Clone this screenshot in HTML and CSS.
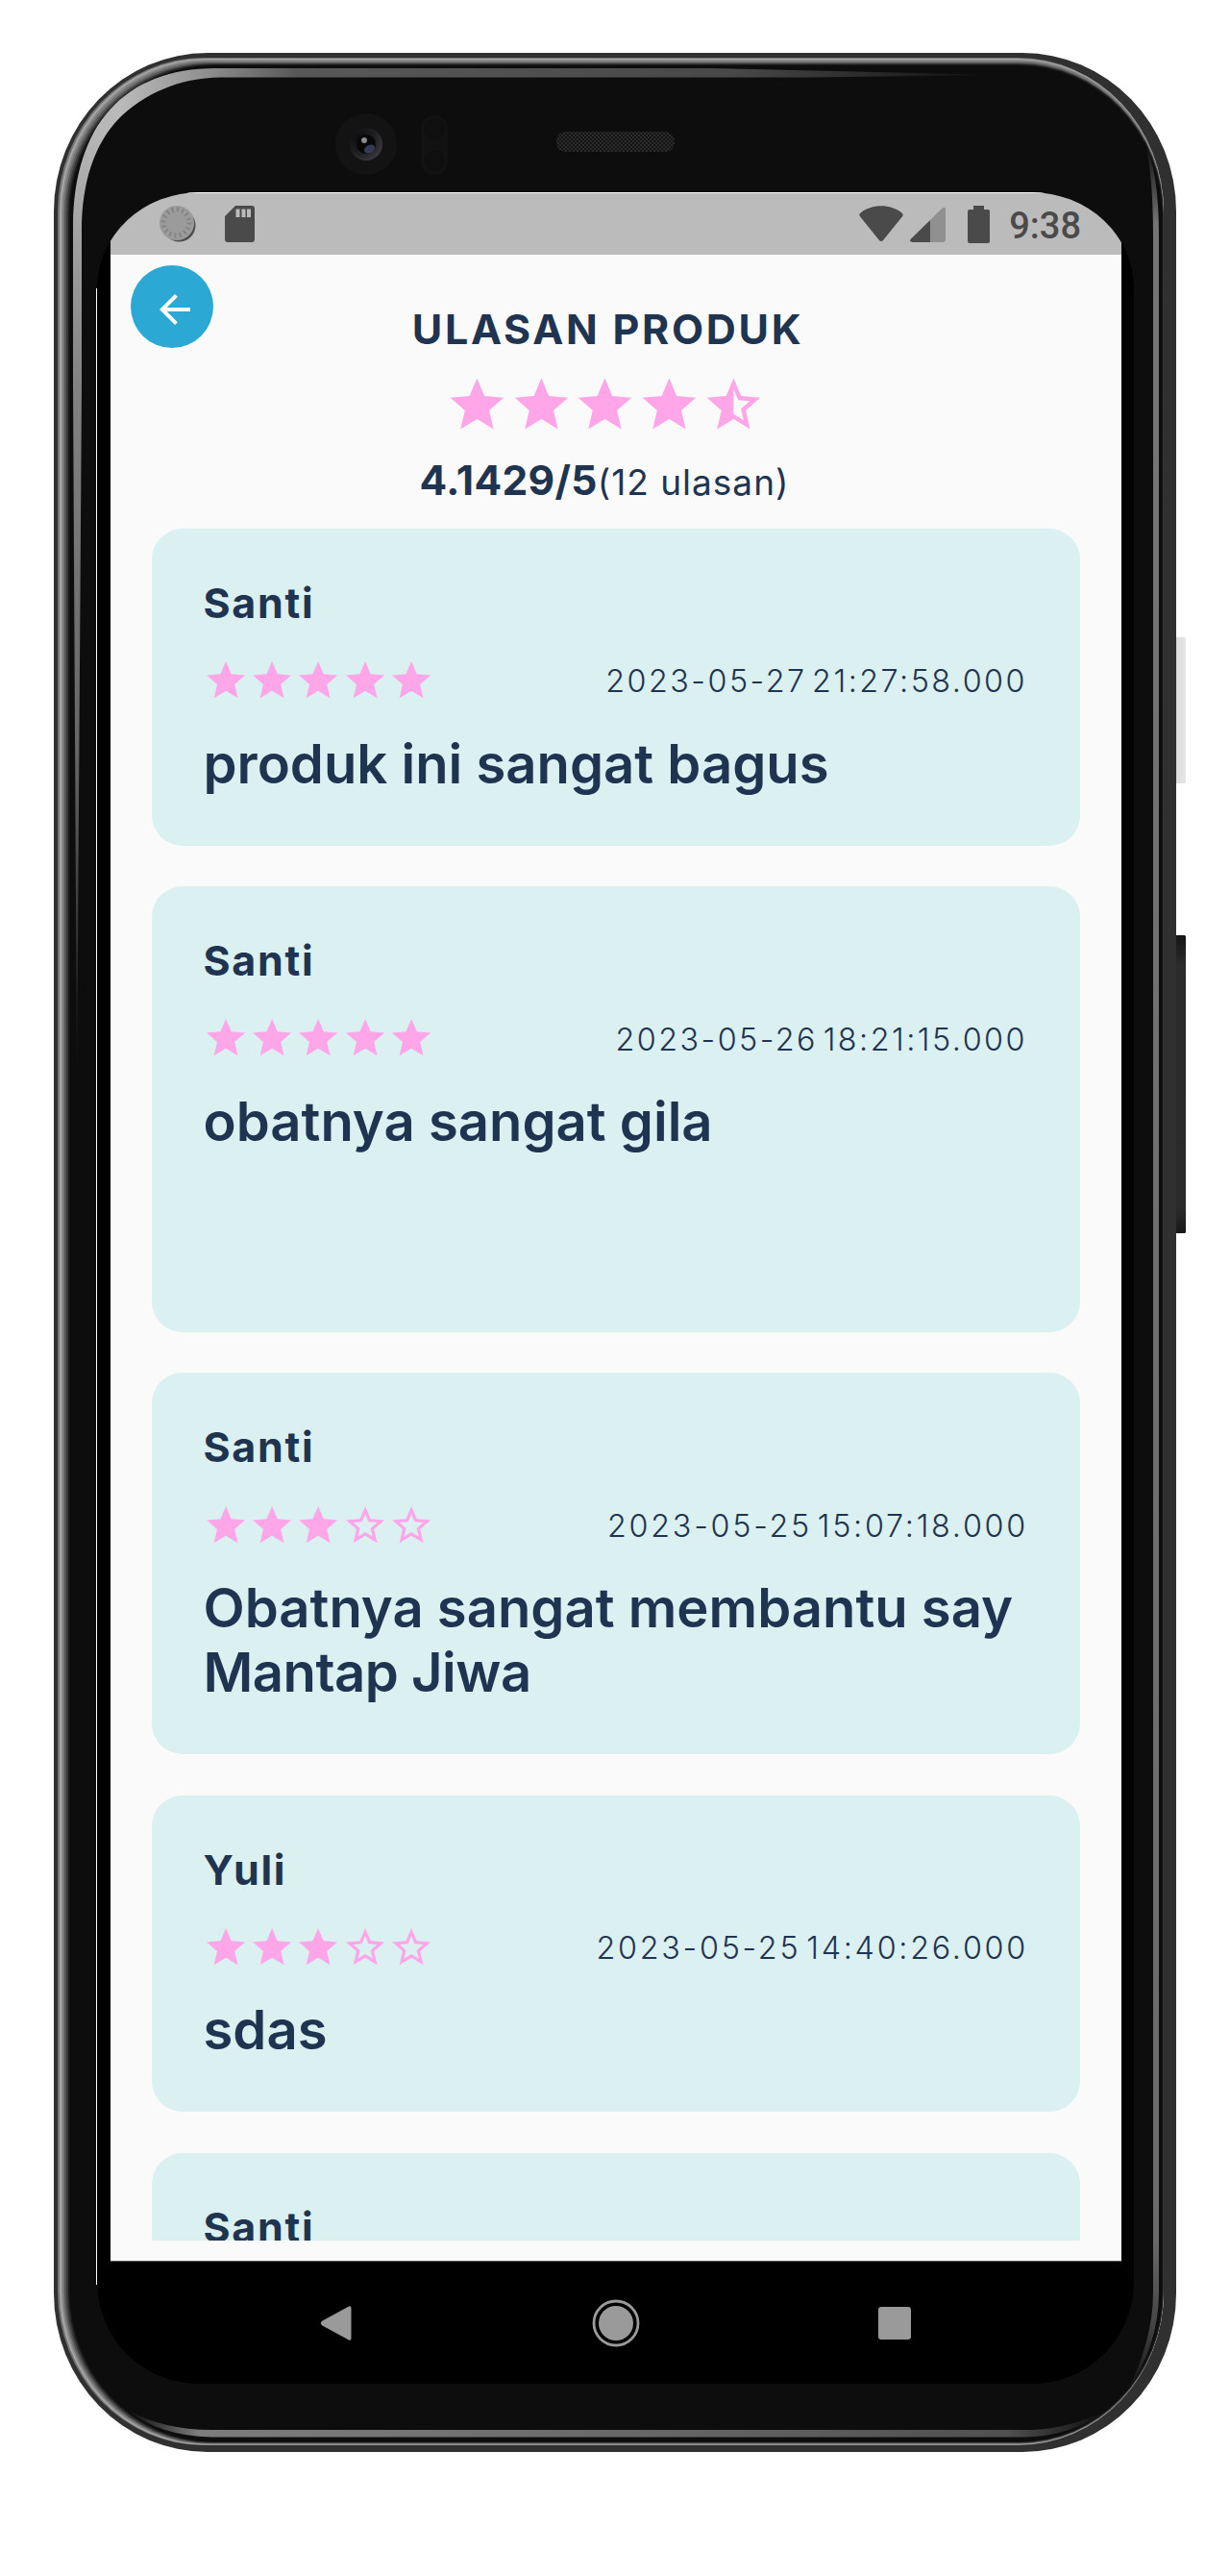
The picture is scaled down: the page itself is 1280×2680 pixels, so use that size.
FILE: index.html
```html
<!DOCTYPE html>
<html lang="id">
<head>
<meta charset="utf-8">
<title>Ulasan Produk</title>
<link rel="stylesheet" href="styles.css">
</head>
<body>
<svg class="defs" width="0" height="0" aria-hidden="true">
  <symbol id="star" viewBox="0 0 24 24"><path d="M12 17.27L18.18 21l-1.64-7.03L22 9.24l-7.19-.61L12 2 9.19 8.63 2 9.24l5.46 4.73L5.82 21z"/></symbol>
  <symbol id="star-half" viewBox="0 0 24 24"><path d="M22 9.24l-7.19-.62L12 2 9.19 8.63 2 9.24l5.46 4.73L5.82 21 12 17.27 18.18 21l-1.63-7.03L22 9.24zM12 15.4V6.1l1.71 4.04 4.38.38-3.32 2.88 1 4.28L12 15.4z"/></symbol>
  <symbol id="star-border" viewBox="0 0 24 24"><path d="M22 9.24l-7.19-.62L12 2 9.19 8.63 2 9.24l5.46 4.73L5.82 21 12 17.27 18.18 21l-1.63-7.03L22 9.24zM12 15.4l-3.76 2.27 1-4.28-3.32-2.88 4.38-.38L12 6.1l1.71 4.04 4.38.38-3.32 2.88 1 4.28L12 15.4z"/></symbol>
</svg>

<div class="stage">
  <svg class="frame" viewBox="0 0 1280 2680" aria-hidden="true">
    <defs>
      <linearGradient id="bevelL" gradientUnits="userSpaceOnUse" x1="0" y1="130" x2="0" y2="1130">
        <stop offset="0" stop-color="#b8b8b8"/><stop offset=".27" stop-color="#828282"/><stop offset=".65" stop-color="#666"/><stop offset="1" stop-color="#0d0d0e"/>
      </linearGradient>
      <linearGradient id="bevelT" gradientUnits="userSpaceOnUse" x1="125" y1="0" x2="1040" y2="0">
        <stop offset="0" stop-color="#bababa"/><stop offset=".09" stop-color="#939393"/><stop offset=".2" stop-color="#585858"/><stop offset=".7" stop-color="#484848"/><stop offset="1" stop-color="#0d0d0e"/>
      </linearGradient>
      <linearGradient id="bevelR" gradientUnits="userSpaceOnUse" x1="0" y1="150" x2="0" y2="2490">
        <stop offset="0" stop-color="#0d0d0e"/><stop offset=".035" stop-color="#747474"/><stop offset=".93" stop-color="#6a6a6b"/><stop offset=".97" stop-color="#444"/><stop offset="1" stop-color="#0d0d0e"/>
      </linearGradient>
      <linearGradient id="bevelB" gradientUnits="userSpaceOnUse" x1="135" y1="0" x2="1150" y2="0">
        <stop offset="0" stop-color="#0d0d0e"/><stop offset=".07" stop-color="#7c7c7d"/><stop offset=".3" stop-color="#747474"/><stop offset=".9" stop-color="#505050"/><stop offset="1" stop-color="#0d0d0e"/>
      </linearGradient>
      <linearGradient id="powerX"><stop offset="0" stop-color="#999"/><stop offset=".35" stop-color="#dedede"/><stop offset="1" stop-color="#e6e6e6"/></linearGradient>
      <linearGradient id="volY" x2="0" y2="1"><stop offset="0" stop-color="#151515"/><stop offset=".1" stop-color="#2b2b2b"/><stop offset=".92" stop-color="#2a2a2a"/><stop offset="1" stop-color="#181818"/></linearGradient>
      <radialGradient id="lens" cx=".3" cy=".3" r=".8"><stop offset="0" stop-color="#0c0c0e"/><stop offset=".6" stop-color="#1f1f22"/><stop offset="1" stop-color="#3c3c42"/></radialGradient>
      <pattern id="mesh" width="4" height="4" patternUnits="userSpaceOnUse"><rect width="4" height="4" fill="#141414"/><rect width="2" height="2" fill="#2b2b2b"/><rect x="2" y="2" width="2" height="2" fill="#2b2b2b"/></pattern>
    </defs>
    <rect x="1220" y="663" width="14" height="152" rx="1.5" fill="url(#powerX)"/>
    <rect x="1220" y="973" width="14" height="310" rx="1.5" fill="url(#volY)"/>
    <rect x="56" y="55" width="1168" height="2496" rx="160" ry="165" fill="#303030"/>
    <rect x="60" y="60" width="1151" height="2484" rx="152" ry="160" fill="#747474"/>
    <rect x="62" y="61" width="1149" height="2482.5" rx="151" ry="159" fill="#a6a6a6"/>
    <rect x="64" y="62.2" width="1147" height="2480.6" rx="150" ry="158" fill="#8c8c8c"/>
    <rect x="65.5" y="63.5" width="1145.5" height="2479" rx="150" ry="158" fill="#747474"/>
    <rect x="67" y="65" width="1143.5" height="2477" rx="150" ry="158" fill="#575757"/>
    <rect x="69" y="66" width="1141.5" height="2475.6" rx="150" ry="157" fill="#383838"/>
    <rect x="71" y="67" width="1139.5" height="2474" rx="150" ry="156" fill="#1c1c1d"/>
    <rect x="72.5" y="68" width="1137" height="2472.5" rx="150" ry="156" fill="#0d0d0e"/>
    <path fill="url(#bevelL)" d="M80 1130L76 400V235C76 183 90 140 115 113.500L124 123C98 150 85 190 85 240V400z"/>
    <path fill="url(#bevelT)" d="M114.500 114C140 86 176 71 225 71H740L1040 78 840 80.500H230C185 81 150 98 123.500 123.500z"/>
    <path fill="url(#bevelR)" d="M1191 145Q1206 180 1206 245V2385Q1206 2440 1172 2490Q1200 2435 1200 2385V245Q1200 180 1191 145z"/>
    <path fill="url(#bevelB)" d="M132 2507Q170 2528 220 2528H1075Q1115 2526 1153 2507Q1115 2535 1065 2535.500H220Q165 2534 132 2507z"/>
    <path fill="none" stroke="#fff" d="M100.500 300V2377"/>
    <circle cx="381" cy="150" r="32" fill="#131313"/>
    <circle cx="381" cy="150" r="17" fill="url(#lens)"/>
    <circle cx="381" cy="150" r="10" fill="#08080b"/>
    <ellipse cx="384.500" cy="155" rx="6" ry="4" transform="rotate(-30 384.500 155)" fill="#353c58"/>
    <circle cx="379" cy="146" r="3" fill="#8a8a8a"/>
    <rect x="438" y="120" width="28" height="62" rx="14" fill="#121212"/>
    <circle cx="452" cy="134" r="11" fill="#0f0f0f"/><circle cx="452" cy="167" r="11" fill="#0f0f0f"/>
    <rect x="579" y="137" width="123" height="21" rx="9.500" fill="url(#mesh)"/>
  </svg>

  <div class="screen">
    <div class="statusbar">
      <div class="status-left">
        <svg width="38" height="38" viewBox="0 0 38 38"><circle cx="20.500" cy="20.500" r="17" fill="#4e4e4e"/><circle cx="18" cy="18" r="18" fill="#9b9b9b"/><circle cx="17.500" cy="17.500" r="13.500" fill="none" stroke="#858585" stroke-width="5" stroke-dasharray="2 3.300"/></svg>
        <svg width="31" height="38" viewBox="0 0 31 38"><path fill="#4a4a4a" d="M11 0H28a3 3 0 0 1 3 3V35a3 3 0 0 1-3 3H3a3 3 0 0 1-3-3V11z"/><path fill="#bbb" d="M11.500 3.500h4V12h-4zM17.500 3.500h4V12h-4zM23 3.500h4V12h-4z"/></svg>
      </div>
      <div class="status-right">
        <svg class="wifi" width="46" height="38" viewBox="0 0 46 38"><path fill="#4a4a4a" d="M1 8C13-2.200 33-2.200 45 8Q46.500 9.500 45 11.300L25 36Q23 38 21 36L1 11.300Q-.5 9.500 1 8z"/></svg>
        <svg class="signal" width="37" height="37" viewBox="0 0 37 37"><path fill="#909090" d="M21 14L33.500 1.500Q37-.5 37 3V34a3 3 0 0 1-3 3H21z"/><path fill="#4a4a4a" d="M21 14V37H2.500Q-1.500 36 1 33.500z"/></svg>
        <svg class="battery" width="23" height="39" viewBox="0 0 23 39"><path fill="#4a4a4a" d="M6 0H17V4H21a2 2 0 0 1 2 2V37a2 2 0 0 1-2 2H2a2 2 0 0 1-2-2V6a2 2 0 0 1 2-2H6z"/></svg>
        <span class="clock">9:38</span>
      </div>
    </div>

    <main class="app">
      <header class="header">
        <button class="back" aria-label="Kembali"><svg width="48" height="48" viewBox="0 0 24 24"><path fill="#fff" d="M20 11H7.830l5.590-5.590L12 4l-8 8 8 8 1.410-1.410L7.830 13H20v-2z"/></svg></button>
        <div class="summary">
          <h1 class="title">ULASAN PRODUK</h1>
          <div class="stars stars-large"><svg><use href="#star"/></svg><svg><use href="#star"/></svg><svg><use href="#star"/></svg><svg><use href="#star"/></svg><svg><use href="#star-half"/></svg></div>
          <p class="rating"><strong class="score">4.1429/5</strong><span class="count">(12 ulasan)</span></p>
        </div>
      </header>

      <section class="reviews">
        <article class="card">
          <h2 class="name">Santi</h2>
          <div class="meta"><div class="stars"><svg><use href="#star"/></svg><svg><use href="#star"/></svg><svg><use href="#star"/></svg><svg><use href="#star"/></svg><svg><use href="#star"/></svg></div><time class="date">2023-05-27 21:27:58.000</time></div>
          <p class="comment">produk ini sangat bagus</p>
        </article>
        <article class="card">
          <h2 class="name">Santi</h2>
          <div class="meta"><div class="stars"><svg><use href="#star"/></svg><svg><use href="#star"/></svg><svg><use href="#star"/></svg><svg><use href="#star"/></svg><svg><use href="#star"/></svg></div><time class="date">2023-05-26 18:21:15.000</time></div>
          <p class="comment">obatnya sangat gila<br><br><br></p>
        </article>
        <article class="card">
          <h2 class="name">Santi</h2>
          <div class="meta"><div class="stars"><svg><use href="#star"/></svg><svg><use href="#star"/></svg><svg><use href="#star"/></svg><svg><use href="#star-border"/></svg><svg><use href="#star-border"/></svg></div><time class="date date-wide">2023-05-25 15:07:18.000</time></div>
          <p class="comment">Obatnya sangat membantu say<br><span class="tight">Mantap Jiwa</span></p>
        </article>
        <article class="card">
          <h2 class="name">Yuli</h2>
          <div class="meta"><div class="stars"><svg><use href="#star"/></svg><svg><use href="#star"/></svg><svg><use href="#star"/></svg><svg><use href="#star-border"/></svg><svg><use href="#star-border"/></svg></div><time class="date date-wide">2023-05-25 14:40:26.000</time></div>
          <p class="comment">sdas</p>
        </article>
        <article class="card">
          <h2 class="name">Santi</h2>
        </article>
      </section>
    </main>

    <nav class="navbar">
      <svg width="50" height="50" viewBox="0 0 50 50"><path fill="#9a9a9a" d="M38 7.500Q40.500 6.500 40.500 9.500V40.500Q40.500 43.500 38 42.500L10.500 27.500Q7 25 10.500 22.500z"/></svg>
      <svg width="50" height="50" viewBox="0 0 50 50"><circle cx="25" cy="25" r="23" fill="none" stroke="#9a9a9a" stroke-width="2.800"/><circle cx="25" cy="25" r="18" fill="#9a9a9a"/></svg>
      <svg width="50" height="50" viewBox="0 0 50 50"><rect x="8" y="8" width="34" height="34" rx="3" fill="#9a9a9a"/></svg>
    </nav>
  </div>
</div>
</body>
</html>
```
FILE: styles.css
```css
* { box-sizing: border-box; }

body {
  margin: 0;
  background: #fff;
  color: #1f3450;
  font-family: Inter, sans-serif;
}

h1, h2, p { margin: 0; }
svg { display: block; flex: none; }

.defs { position: absolute; }

.stage {
  position: relative;
  width: 1280px;
  height: 2680px;
  padding: 200px 100px;
}

/* Phone body drawn behind the screen */
.frame {
  position: absolute;
  inset: 0;
  width: 1280px;
  height: 2680px;
}

.screen {
  position: relative;
  display: flex;
  flex-direction: column;
  width: 1079px;
  height: 2280px;
  margin-left: 1px;
  padding: 0 13px 0 14px;
  border-radius: 107px 107px 106px 106px / 100px 100px 106px 106px;
  overflow: hidden;
  background: #000;
}

.statusbar {
  display: flex;
  justify-content: space-between;
  flex: none;
  height: 65px;
  padding: 13px 42px 0 51px;
  border-top: 1px solid #fff;
  background: #bbb;
}

.status-left, .status-right { display: flex; align-items: flex-start; }
.status-left { gap: 30px; }
.signal { margin: 1px 23px 0 7px; }
.clock {
  margin: -1px 0 0 20px;
  color: #4a4a4a;
  font: 500 38px/44px Roboto, sans-serif;
}

.app {
  display: flex;
  flex-direction: column;
  flex: none;
  height: 2087px;
  padding-bottom: 21px;
  background: #fafafa;
}

.header {
  display: flex;
  align-items: flex-start;
  flex: none;
  height: 285px;
  padding: 11px 129px 0 21px;
}

.back {
  display: flex;
  flex: none;
  width: 86px;
  height: 86px;
  padding: 22px 0 0 22px;
  border: 0;
  border-radius: 50%;
  background: #2ba9d4;
}

.summary {
  display: flex;
  flex: 1;
  flex-direction: column;
  align-items: center;
  padding-top: 40px;
}

.title {
  margin-right: -5px;
  font-size: 43px;
  font-weight: 700;
  line-height: 52px;
  letter-spacing: 2.7px;
}

.stars { display: flex; fill: #ffa6e9; }
.stars svg { width: 48.2px; height: 48.2px; }
.stars-large { margin: 20.4px 0 18.8px; }
.stars-large svg { width: 66.8px; height: 66.8px; }

.rating {
  display: flex;
  align-items: baseline;
  height: 52px;
  margin-right: 2px;
  line-height: 52px;
  white-space: nowrap;
}
.score { font-size: 42.5px; letter-spacing: 0.3px; }
.count { font-size: 37px; letter-spacing: 1px; }

.reviews {
  display: flex;
  flex: 1;
  flex-direction: column;
  gap: 42.7px;
  min-height: 0;
  padding: 0 43px;
  overflow: hidden;
}

.card {
  flex: none;
  min-height: 329.5px;
  padding: 51px 55px 50.800px 53.5px;
  border-radius: 32px;
  background: #dbf0f1;
}

.name {
  font-size: 43px;
  font-weight: 700;
  line-height: 52px;
  letter-spacing: 1.7px;
}

.meta {
  display: flex;
  align-items: center;
  justify-content: space-between;
  height: 48.200px;
  margin: 31.300px 0 29.200px;
}

.stars { margin-left: -0.5px; }

.date {
  padding-top: 2px;
  font-size: 32.3px;
  font-weight: 300;
  line-height: 48px;
  letter-spacing: 2.5px;
  word-spacing: -6px;
  white-space: nowrap;
}
.date-wide { margin-right: -1px; letter-spacing: 2.75px; }

.comment {
  font-size: 56.2px;
  font-weight: 600;
  line-height: 67px;
  white-space: nowrap;
}
.tight { letter-spacing: -0.5px; }

.navbar {
  display: flex;
  align-items: center;
  justify-content: space-between;
  flex: 1;
  padding: 0 211px 0 210px;
  border-top: 1px solid #555;
}
```
